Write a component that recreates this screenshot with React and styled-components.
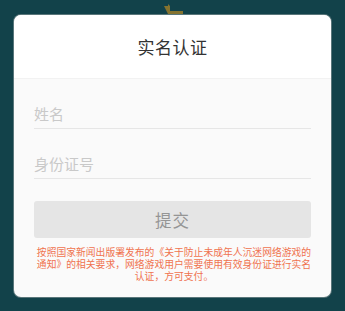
import React from "react";
import styled, { createGlobalStyle } from "styled-components";

const GlobalStyle = createGlobalStyle`
  html, body {
    margin: 0;
    padding: 0;
    background: #12424a;
  }
  body {
    font-family: "Noto Sans CJK SC", "Noto Sans", sans-serif;
  }
`;

const Page = styled.div`
  position: relative;
  width: 345px;
  height: 311px;
  box-sizing: border-box;
  padding: 15px 14px 0;
  background: #12424a;
  overflow: hidden;
`;

const Ornament = styled.svg`
  position: absolute;
  left: 163px;
  top: 3px;
`;

const Card = styled.div`
  position: relative;
  width: 317px;
  height: 282px;
  border-radius: 7px;
  overflow: hidden;
  background: #fafafa;
  box-shadow: 0 0 0 1px rgba(160, 170, 170, 0.5);
  display: flex;
  flex-direction: column;
`;

const Header = styled.div`
  height: 63px;
  background: #ffffff;
  border-bottom: 1px solid #f2f2f2;
  display: flex;
  align-items: center;
  justify-content: center;
  font-size: 17px;
  color: #333333;
  letter-spacing: 0.5px;
`;

const Body = styled.div`
  padding: 12px 20px 0;
  display: flex;
  flex-direction: column;
`;

const Field = styled.input`
  width: 100%;
  box-sizing: border-box;
  height: 38px;
  margin-bottom: 12px;
  border: none;
  border-bottom: 1px solid #e6e6e6;
  background: transparent;
  padding: 8px 0 0;
  font-family: inherit;
  font-size: 15px;
  color: #333;
  outline: none;

  &::placeholder {
    color: #c9c9c9;
  }
`;

const Submit = styled.button`
  margin-top: 10px;
  height: 37px;
  border: none;
  border-radius: 3px;
  background: #e5e5e5;
  color: #959595;
  font-family: inherit;
  font-size: 16.5px;
  letter-spacing: 1px;
`;

const Notice = styled.p`
  margin: 8px auto 0;
  width: 280px;
  font-size: 9.8px;
  line-height: 12px;
  color: #f0734f;
  text-align: center;
`;

const App = () => {
  return (
    <>
      <GlobalStyle />
      <Page>
        <Ornament width="22" height="12" viewBox="0 0 22 12">
          <path d="M1 3 L5 3 L5 1 L7 3 L7 8 L20 8 L20 11 L5 11 Z" fill="#9a7b2a" opacity="0.85" />
        </Ornament>
        <Card>
          <Header>实名认证</Header>
          <Body>
            <Field placeholder="姓名" />
            <Field placeholder="身份证号" />
            <Submit>提交</Submit>
            <Notice>
              按照国家新闻出版署发布的《关于防止未成年人沉迷网络游戏的通知》的相关要求，网络游戏用户需要使用有效身份证进行实名认证，方可支付。
            </Notice>
          </Body>
        </Card>
      </Page>
    </>
  );
};

export default App;
